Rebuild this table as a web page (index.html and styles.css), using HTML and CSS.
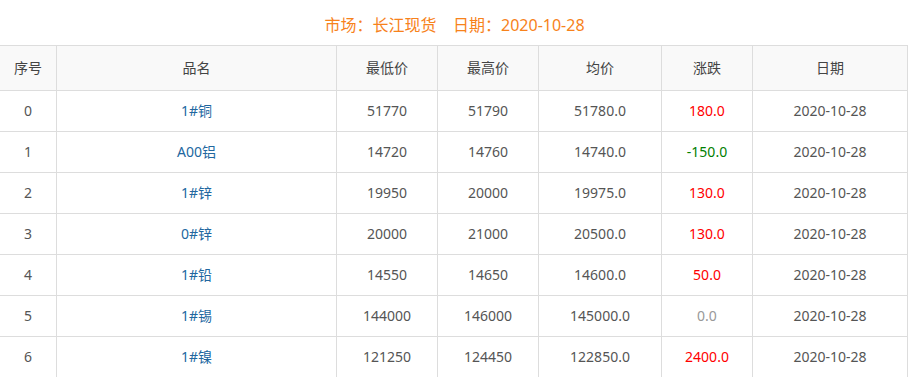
FILE: index.html
```html
<!DOCTYPE html>
<html lang="zh-CN">
<head>
<meta charset="utf-8">
<title>长江现货</title>
<link rel="stylesheet" href="styles.css">
</head>
<body>
<div class="title">市场：长江现货&nbsp;&nbsp;&nbsp;&nbsp;日期：2020-10-28</div>
<table class="price-table">
  <colgroup>
    <col class="c-idx"><col class="c-name"><col class="c-low"><col class="c-high"><col class="c-avg"><col class="c-chg"><col class="c-date">
  </colgroup>
  <thead>
    <tr><th>序号</th><th>品名</th><th>最低价</th><th>最高价</th><th>均价</th><th>涨跌</th><th>日期</th></tr>
  </thead>
  <tbody>
    <tr><td>0</td><td class="name">1#铜</td><td>51770</td><td>51790</td><td>51780.0</td><td class="up">180.0</td><td>2020-10-28</td></tr>
    <tr><td>1</td><td class="name">A00铝</td><td>14720</td><td>14760</td><td>14740.0</td><td class="down">-150.0</td><td>2020-10-28</td></tr>
    <tr><td>2</td><td class="name">1#锌</td><td>19950</td><td>20000</td><td>19975.0</td><td class="up">130.0</td><td>2020-10-28</td></tr>
    <tr><td>3</td><td class="name">0#锌</td><td>20000</td><td>21000</td><td>20500.0</td><td class="up">130.0</td><td>2020-10-28</td></tr>
    <tr><td>4</td><td class="name">1#铅</td><td>14550</td><td>14650</td><td>14600.0</td><td class="up">50.0</td><td>2020-10-28</td></tr>
    <tr><td>5</td><td class="name">1#锡</td><td>144000</td><td>146000</td><td>145000.0</td><td class="flat">0.0</td><td>2020-10-28</td></tr>
    <tr><td>6</td><td class="name">1#镍</td><td>121250</td><td>124450</td><td>122850.0</td><td class="up">2400.0</td><td>2020-10-28</td></tr>
  </tbody>
</table>
</body>
</html>
```
FILE: styles.css
```css
* { box-sizing: border-box; }
html, body { margin: 0; padding: 0; background: #fff; }
body {
  font-family: "Noto Sans", "Noto Sans CJK SC", sans-serif;
  font-size: 14px;
  color: #555;
}
.title {
  height: 45px;
  padding-top: 5px;
  line-height: 40px;
  text-align: center;
  font-size: 16px;
  color: #f7821b;
}
.price-table {
  width: 908px;
  table-layout: fixed;
  border-collapse: separate;
  border-spacing: 0;
}
.c-idx { width: 57px; }
.c-name { width: 280px; }
.c-low { width: 101px; }
.c-high { width: 101px; }
.c-avg { width: 123px; }
.c-chg { width: 91px; }
.c-date { width: 155px; }
.price-table th,
.price-table td {
  padding: 0 0 2px;
  text-align: center;
  border-right: 1px solid #ddd;
  border-bottom: 1px solid #ddd;
  font-weight: normal;
  white-space: nowrap;
}
.price-table th {
  height: 46px;
  border-top: 1px solid #ddd;
  background: #f9f9f9;
  color: #444;
}
.price-table td { height: 41px; }
.price-table .name { color: #22679f; }
.price-table .up { color: #f00; }
.price-table .down { color: #008000; }
.price-table .flat { color: #999; }
```
